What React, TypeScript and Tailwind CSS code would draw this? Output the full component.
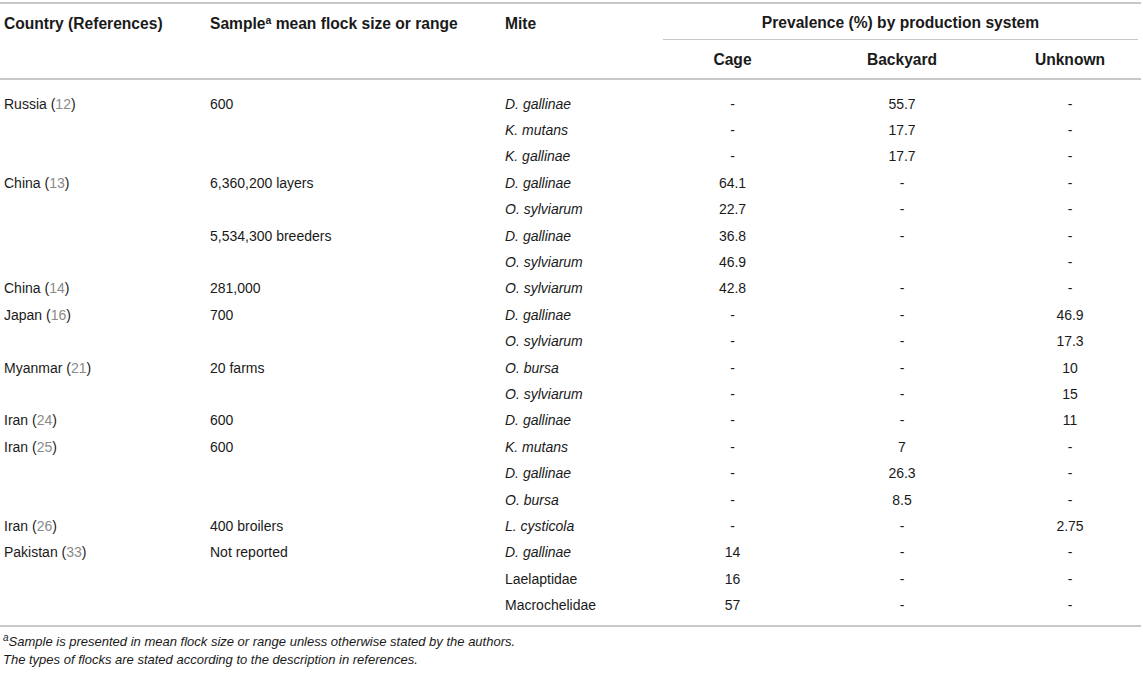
type Row = {
  country?: string
  ref?: string
  sample?: string
  mite: string
  cage: string
  backyard: string
  unknown: string
}

const rows: Row[] = [
  { country: "Russia", ref: "12", sample: "600", mite: "D. gallinae", cage: "-", backyard: "55.7", unknown: "-" },
  { mite: "K. mutans", cage: "-", backyard: "17.7", unknown: "-" },
  { mite: "K. gallinae", cage: "-", backyard: "17.7", unknown: "-" },
  { country: "China", ref: "13", sample: "6,360,200 layers", mite: "D. gallinae", cage: "64.1", backyard: "-", unknown: "-" },
  { mite: "O. sylviarum", cage: "22.7", backyard: "-", unknown: "-" },
  { sample: "5,534,300 breeders", mite: "D. gallinae", cage: "36.8", backyard: "-", unknown: "-" },
  { mite: "O. sylviarum", cage: "46.9", backyard: "", unknown: "-" },
  { country: "China", ref: "14", sample: "281,000", mite: "O. sylviarum", cage: "42.8", backyard: "-", unknown: "-" },
  { country: "Japan", ref: "16", sample: "700", mite: "D. gallinae", cage: "-", backyard: "-", unknown: "46.9" },
  { mite: "O. sylviarum", cage: "-", backyard: "-", unknown: "17.3" },
  { country: "Myanmar", ref: "21", sample: "20 farms", mite: "O. bursa", cage: "-", backyard: "-", unknown: "10" },
  { mite: "O. sylviarum", cage: "-", backyard: "-", unknown: "15" },
  { country: "Iran", ref: "24", sample: "600", mite: "D. gallinae", cage: "-", backyard: "-", unknown: "11" },
  { country: "Iran", ref: "25", sample: "600", mite: "K. mutans", cage: "-", backyard: "7", unknown: "-" },
  { mite: "D. gallinae", cage: "-", backyard: "26.3", unknown: "-" },
  { mite: "O. bursa", cage: "-", backyard: "8.5", unknown: "-" },
  { country: "Iran", ref: "26", sample: "400 broilers", mite: "L. cysticola", cage: "-", backyard: "-", unknown: "2.75" },
  { country: "Pakistan", ref: "33", sample: "Not reported", mite: "D. gallinae", cage: "14", backyard: "-", unknown: "-" },
  { mite: "Laelaptidae", cage: "16", backyard: "-", unknown: "-" },
  { mite: "Macrochelidae", cage: "57", backyard: "-", unknown: "-" },
]

const isSpecies = (m: string) => m.includes(".")

const cols = "grid grid-cols-[206px_295px_162px_139px_200px_136px]"

export default function App() {
  return (
    <div className="w-[1143px] h-[674px] bg-white pt-[2px] font-['Liberation_Sans',Arial,sans-serif] text-[14px] text-[#1a1a1a]">
      <div className="w-[1141px] border-t-2 border-[#c8c8c8]">
        {/* header */}
        <div className={`${cols} grid-rows-[36px_38px] border-b-2 border-[#c8c8c8] font-bold text-[15.6px]`}>
          <div className="row-span-2 pl-1 pt-[3px] h-[36px] flex items-center">Country (References)</div>
          <div className="row-span-2 pl-1 pt-[3px] h-[36px] flex items-center">
            <span>
              Sample<sup className="text-[10.5px] font-bold">a</sup> mean flock size or range
            </span>
          </div>
          <div className="row-span-2 pl-1 pt-[3px] h-[36px] flex items-center">Mite</div>
          <div className="col-span-3 pt-[3px] flex items-center justify-center border-b border-[#c8c8c8]">
            Prevalence (%) by production system
          </div>
          <div className="flex items-center justify-center pt-[1px]">Cage</div>
          <div className="flex items-center justify-center pt-[1px]">Backyard</div>
          <div className="flex items-center justify-center pt-[1px]">Unknown</div>
        </div>

        {/* body */}
        <div className="pt-[11px] pb-[6px] border-b-2 border-[#c8c8c8]">
          {rows.map((r, i) => (
            <div key={i} className={`${cols} h-[26.4px] items-center`}>
              <div className="pl-1">
                {r.country && (
                  <>
                    {r.country} (<span className="text-[#8a8a8a]">{r.ref}</span>)
                  </>
                )}
              </div>
              <div className="pl-1">{r.sample}</div>
              <div className={`pl-1 ${isSpecies(r.mite) ? "italic" : ""}`}>{r.mite}</div>
              <div className="text-center">{r.cage}</div>
              <div className="text-center">{r.backyard}</div>
              <div className="text-center">{r.unknown}</div>
            </div>
          ))}
        </div>

        {/* footnotes */}
        <div className="pt-[6px] pl-[3px] text-[13px] italic leading-[18px]">
          <p>
            <sup className="text-[10px]">a</sup>Sample is presented in mean flock size or range unless otherwise stated by the authors.
          </p>
          <p>The types of flocks are stated according to the description in references.</p>
        </div>
      </div>
    </div>
  )
}
